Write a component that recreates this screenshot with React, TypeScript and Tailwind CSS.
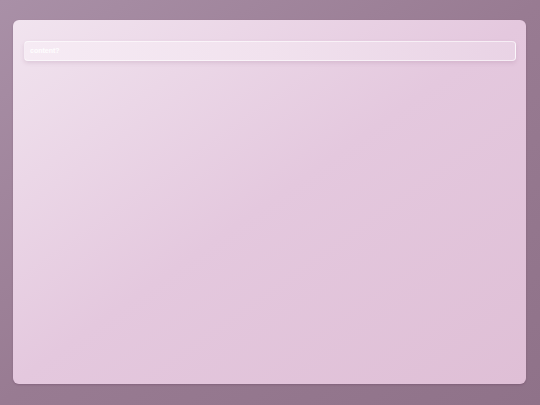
export default function App() {
  return (
    <div className="h-[405px] w-[540px] overflow-hidden bg-gradient-to-br from-[#a990a7] via-[#987b92] to-[#8f7289] pt-[20px] pl-[13px] pr-[14px]">
      <div className="h-[364px] rounded-[6px] bg-gradient-to-br from-[#f1e4ef] via-[#e4c8de] to-[#dfbfd6] px-[10px] pl-[11px] pt-[21px] shadow-[0_1px_2px_rgba(80,40,70,0.25)]">
        <div className="flex h-[20px] items-center rounded-[4px] border border-white/60 bg-gradient-to-r from-[#f6ebf4] via-[#f1e2ee] to-[#e9d3e5] px-[5px] shadow-[0_2px_4px_rgba(120,70,110,0.15)]">
          <input
            readOnly
            placeholder="content?"
            className="w-full bg-transparent text-[7px] font-bold text-white outline-none placeholder:text-white/90"
            style={{ fontFamily: '"Liberation Sans", Arial, sans-serif' }}
          />
        </div>
      </div>
    </div>
  );
}
